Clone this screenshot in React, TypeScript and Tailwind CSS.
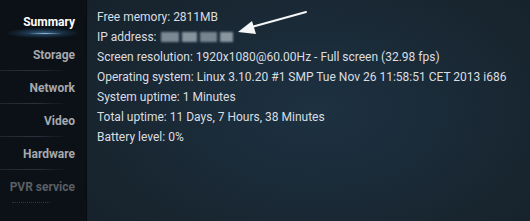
import React from "react";

const menu = [
  { label: "Summary", cls: "text-white font-bold", active: true },
  { label: "Storage", cls: "text-[#a5a9ad] font-bold" },
  { label: "Network", cls: "text-[#a5a9ad] font-bold" },
  { label: "Video", cls: "text-[#a5a9ad] font-bold" },
  { label: "Hardware", cls: "text-[#a5a9ad] font-bold" },
  { label: "PVR service", cls: "text-[#5a5f64] font-bold", dotted: true },
];

const lines = [
  "Free memory: 2811MB",
  "IP address:",
  "Screen resolution: 1920x1080@60.00Hz - Full screen (32.98 fps)",
  "Operating system: Linux 3.10.20 #1 SMP Tue Nov 26 11:58:51 CET 2013 i686",
  "System uptime: 1 Minutes",
  "Total uptime: 11 Days, 7 Hours, 38 Minutes",
  "Battery level: 0%",
];

export default function App() {
  return (
    <div
      className="w-[530px] h-[221px] flex overflow-hidden relative"
      style={{ fontFamily: "Roboto, 'Noto Sans', sans-serif" }}
    >
      {/* sidebar */}
      <div className="w-[86px] h-full bg-[#0b1117] pt-[5px] flex flex-col shrink-0">
        {menu.map((m) => (
          <div key={m.label} className="relative h-[33px] flex items-center justify-end pr-[11px]">
            <span className={`text-[12px] leading-none ${m.cls}`}>{m.label}</span>
            {m.active ? (
              <>
                <div className="absolute left-[8px] w-[70px] bottom-[0px] h-[10px] rounded-full bg-[radial-gradient(ellipse_at_center,rgba(70,125,170,0.7)_0%,rgba(40,80,120,0.4)_45%,rgba(20,40,60,0)_75%)]" />
                <div className="absolute left-[28px] w-[34px] bottom-[4px] h-px bg-[linear-gradient(to_right,rgba(150,190,220,0),rgba(170,205,230,0.8)_50%,rgba(150,190,220,0))]" />
              </>
            ) : m.dotted ? (
              <div className="absolute left-[12px] w-[38px] bottom-0 border-b border-dotted border-[#2c353d]" />
            ) : (
              <div className="absolute left-0 w-[68px] bottom-0 h-px bg-[linear-gradient(to_right,rgba(45,55,65,0.5),rgba(45,55,65,0.9)_50%,rgba(45,55,65,0))]" />
            )}
          </div>
        ))}
      </div>

      {/* content */}
      <div className="flex-1 h-full relative bg-[radial-gradient(ellipse_420px_260px_at_230px_110px,#1d3142_0%,#18252f_55%,#131a22_100%)] pl-[11px] pt-[7px]">
        <div className="absolute left-0 top-0 h-full w-px bg-[#070b0f]" />
        <div className="flex flex-col text-[12px] text-[#dadee1] leading-[20px]">
          {lines.map((l, i) => (
            <div key={i} className="h-[20px] flex items-center whitespace-nowrap">
              <span>{l}</span>
              {i === 1 && (
                <span className="ml-[5px] flex items-center gap-[3px] h-[12px] blur-[1.2px]">
                  <span className="w-[18px] h-[10px] bg-[#7a8994]" />
                  <span className="w-[15px] h-[10px] bg-[#86949e]" />
                  <span className="w-[17px] h-[10px] bg-[#75848f]" />
                  <span className="w-[13px] h-[10px] bg-[#8896a0]" />
                </span>
              )}
            </div>
          ))}
        </div>
      </div>

      {/* arrow */}
      <svg className="absolute left-0 top-0" width="530" height="221" viewBox="0 0 530 221">
        <line x1="306" y1="12" x2="248" y2="28" stroke="#f4f6f7" strokeWidth="2" strokeLinecap="round" />
        <polygon points="238,32 252,21 256,34" fill="#f4f6f7" />
      </svg>
    </div>
  );
}
